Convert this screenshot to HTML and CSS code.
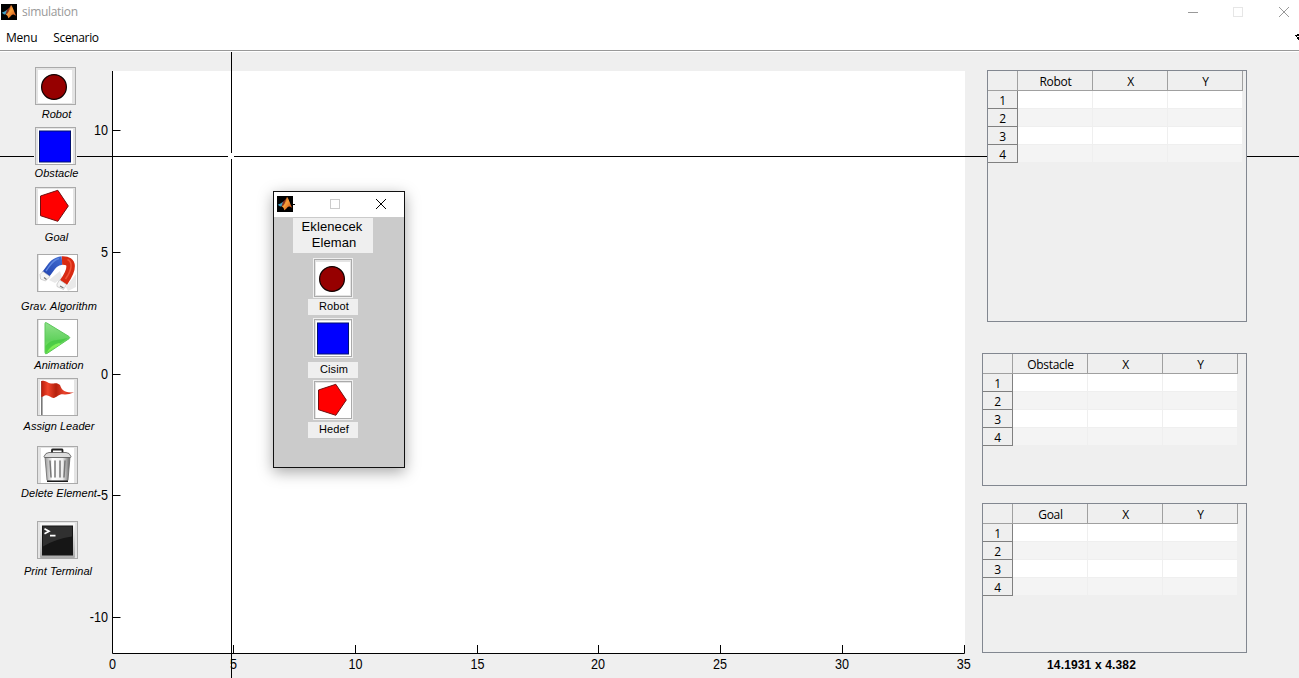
FILE: index.html
```html
<!DOCTYPE html>
<html lang="en">
<head>
<meta charset="utf-8">
<title>simulation</title>
<link rel="stylesheet" href="styles.css">
</head>
<body>
<svg class="defs" width="0" height="0">
  <defs>
    <linearGradient id="flame" x1="0" y1="0" x2="1" y2="1"><stop offset="0" stop-color="#a02a12"/><stop offset=".45" stop-color="#f7a03a"/><stop offset="1" stop-color="#c23a10"/></linearGradient>
    <linearGradient id="blue" x1="0" y1="1" x2="1" y2="0"><stop offset="0" stop-color="#2448b4"/><stop offset="1" stop-color="#3f68cc"/></linearGradient>
    <linearGradient id="green" x1="0" y1="0" x2="0" y2="1"><stop offset="0" stop-color="#8fe08a"/><stop offset=".55" stop-color="#62d25e"/><stop offset="1" stop-color="#7dee55"/></linearGradient>
    <linearGradient id="red" x1="0" y1="0" x2="1" y2="0"><stop offset="0" stop-color="#b81c0a"/><stop offset=".2" stop-color="#f0452c"/><stop offset=".45" stop-color="#b5200c"/><stop offset=".7" stop-color="#e8432c"/><stop offset="1" stop-color="#c8200c"/></linearGradient>
    <linearGradient id="metal" x1="0" y1="0" x2="1" y2="0"><stop offset="0" stop-color="#999"/><stop offset=".3" stop-color="#fff"/><stop offset=".7" stop-color="#eee"/><stop offset="1" stop-color="#666"/></linearGradient>
    <linearGradient id="frame" x1="0" y1="0" x2="0" y2="1"><stop offset="0" stop-color="#fafafa"/><stop offset="1" stop-color="#aaa"/></linearGradient>
    <symbol id="logo" viewBox="0 0 16 16">
      <rect width="16" height="16" fill="#000"/>
      <path d="M.7 8.8 4 7.2 6 5.8 7.3 6.5 4.7 10.2 3.2 10.4z" fill="#3fa0c4"/>
      <path d="M6 5.8 8.5 3.5 10 1 8.5 6.5 5.7 10.8 4.5 10.2z" fill="#873020"/>
      <path d="M10 1C11 1 12.5 6.5 15.3 12 13 10.5 11.8 10 10.5 11.2 9 13 8 14 7.3 14.2 7 12 6 10.8 4.7 10.4 8 9.5 8.5 4 10 1z" fill="url(#flame)"/>
    </symbol>
    <symbol id="robot" viewBox="1 1 39 36"><rect x="3" y="3" width="34" height="33" fill="#fff"/><circle cx="19" cy="20" r="12.4" fill="#960000" stroke="#100" stroke-width="1.2"/></symbol>
    <symbol id="square" viewBox="1 1 39 36"><rect x="3" y="2" width="35" height="35" fill="#fff"/><rect x="4.500" y="4" width="31" height="31" fill="#00f" stroke="#001070"/></symbol>
    <symbol id="pentagon" viewBox="1 1 39 36"><rect x="3" y="2" width="35" height="35" fill="#fff"/><path d="M5.5 9 22.8 3.3 33.3 19 22.8 34.3 5.5 28.7z" fill="#f00" stroke="#701010"/></symbol>
  </defs>
</svg>

<header class="titlebar">
  <svg class="logo"><use href="#logo"/></svg>
  <span class="title">simulation</span>
  <svg class="controls" width="101" height="10" fill="none">
    <path d="M0 5.5H10" stroke="#999"/><rect x="45.5" y=".5" width="9" height="9" stroke="#e6e6e6"/><path d="M91 0 101 10M101 0 91 10" stroke="#999"/>
  </svg>
</header>
<nav class="menubar"><span class="menu">Menu</span><span class="menu scenario">Scenario</span>
  <svg class="dock" width="4" height="7"><path d="M0 1H2V0H4V2H2V3H4V6H3V5H2V3H1V2H0z" fill="#000"/></svg>
</nav>

<main class="workspace">
  <div class="cross-h"></div><div class="cross-v"></div><div class="cross-gap"></div>

  <aside class="tools">
    <div class="tool"><div class="button"><svg><use href="#robot"/></svg></div><span class="label g2">Robot</span></div>
    <div class="tool"><div class="button"><svg><use href="#square"/></svg></div><span class="label g1">Obstacle</span></div>
    <div class="tool h67"><div class="button"><svg><use href="#pentagon"/></svg></div><span class="label g5">Goal</span></div>
    <div class="tool wide h65"><div class="button"><svg viewBox="1 1 39 36"><rect x="2" y="1" width="38" height="36" fill="#fff"/>
      <path d="M12 26 23 17 25 24 18 29zM29 33 39 20V33L31 37z" fill="#e9e9e9"/>
      <g fill="none" stroke-width="8.500"><path d="M8.500 20.500C13.500 15 15.500 7.500 25 6.500" stroke="url(#blue)"/><path d="M25 6.500C36.500 6 36 15 26.500 28.500" stroke="#d82a12"/><path d="M30.500 5.500C36 8 35 16 28.500 25" stroke="#ef5236" stroke-width="1.500"/><path d="M9 17C13 12 15 6 22 4.500" stroke="#6088e0" stroke-width="1.300"/></g>
      <path d="M3 20.500 6 17.500 13 22.500 8.500 27 3.500 25zM20 30 22.500 26 29.500 30.500 26.500 35.500 20 32.500z" fill="#f5f5f5" stroke="#b5b5b5" stroke-width=".6"/><path d="M7 23.500 9.500 25.500M23 32 26.500 34" stroke="#777" stroke-width="1.200"/>
    </svg></div><span class="label g7">Grav. Algorithm</span></div>
    <div class="tool wide h59"><div class="button"><svg viewBox="1 1 39 36"><rect x="2" y="1" width="38" height="36" fill="#fff"/>
      <path d="M8 4.500Q8 3 9.500 3.800L32 17.500Q33.500 18.700 32 19.700L10 34.500Q8 35.500 8 33.500z" fill="url(#green)" stroke="#5cc85a"/>
      <path d="M8.500 27Q13 21 20 21 27 20 31 18.800L10 33.500 8.500 34z" fill="#3fc43c" opacity=".65"/><path d="M10 33Q14 26 22 24L24 25z" fill="#94fb60" opacity=".7"/>
    </svg></div><span class="label g1">Animation</span></div>
    <div class="tool wide h68"><div class="button"><svg viewBox="1 1 39 36"><rect x="3" y="2" width="34" height="35" fill="#fff"/>
      <rect x="4" y="3" width="1.600" height="34" fill="#777"/>
      <path d="M4.300 3C9 1.500 10 5 14 5.500 18 5.500 20 4 23 7 25 13 28 14.500 37 14.500 32 16 30 17 26 16.300 22 16 20 19 17 20 14 20.300 12 17 9 17.300 7 17.500 6 19 4.300 19z" fill="url(#red)"/>
    </svg></div><span class="label g3">Assign Leader</span></div>
    <div class="tool wide h75"><div class="button"><svg viewBox="1 1 39 36"><rect x="4" y="2" width="33" height="35" fill="#fff"/>
      <path d="M15 7V4Q15 3.500 16 3.500H24.500Q25.500 3.500 25.500 4V7" fill="none" stroke="#222" stroke-width="1.800"/>
      <path d="M8 11H33L31 34Q31 35 29 35H12Q10 35 10 34z" fill="url(#metal)" stroke="#666" stroke-width=".8"/>
      <path d="M9 7.500 12 6.500H29L32 7.500 34 10.500Q34 11.500 33 11.500H8Q7 11.500 7 10.500z" fill="#ddd" stroke="#555" stroke-width=".8"/>
      <path d="M13 15 14 31M18 15V31M23 15V31M28 15 27 31" stroke="#777" stroke-width="1.500" stroke-linecap="round"/><path d="M10 35.300H31" stroke="#111" stroke-width="1.300"/>
    </svg></div><span class="label g2">Delete Element</span></div>
    <div class="tool wide"><div class="button"><svg viewBox="1 1 39 36">
      <rect x="3" y="2" width="35" height="35" rx="1" fill="url(#frame)"/><rect x="5" y="4.500" width="31" height="30" fill="#161616"/><path d="M6 25.500Q18 18 35 15.500V5.500H6z" fill="#303030"/>
      <path d="M7.500 7.800 12 10.300 7.500 12.800M13 14.600H18.500" fill="none" stroke="#fff" stroke-width="1.700"/>
    </svg></div><span class="label g5 terminal">Print Terminal</span></div>
  </aside>

  <svg class="plot" width="853" height="626">
    <rect x="0" y="19" width="853" height="583" fill="#fff"/>
    <path d="M.5 19V601.500H852.500V593M0 78.500H8.500M0 200.500H8.500M0 322.500H8.500M0 443.500H8.500M0 565.500H8.500M121.500 593V601M243.500 593V601M365.500 593V601M486.500 593V601M608.500 593V601M730.500 593V601" fill="none" stroke="#000"/>
    <g transform="scale(.9 1)">
      <g text-anchor="end"><text x="-4.400" y="83">10</text><text x="-4.400" y="205">5</text><text x="-4.400" y="327">0</text><text x="-4.400" y="448">-5</text><text x="-4.400" y="570">-10</text></g>
      <g text-anchor="middle"><text x=".6" y="617">0</text><text x="135" y="617">5</text><text x="270.500" y="617">10</text><text x="406" y="617">15</text><text x="540" y="617">20</text><text x="675.500" y="617">25</text><text x="811" y="617">30</text><text x="946.500" y="617">35</text></g>
    </g>
  </svg>

  <section class="panels">
    <div class="panel robots"><div class="grid">
      <b></b><b>Robot</b><b>X</b><b>Y</b>
      <i>1</i><s></s><s></s><s></s>
      <i>2</i><s class="alt"></s><s class="alt"></s><s class="alt"></s>
      <i>3</i><s></s><s></s><s></s>
      <i>4</i><s class="alt"></s><s class="alt"></s><s class="alt"></s>
    </div></div>
    <div class="panel obstacles"><div class="grid">
      <b></b><b>Obstacle</b><b>X</b><b>Y</b>
      <i>1</i><s></s><s></s><s></s>
      <i>2</i><s class="alt"></s><s class="alt"></s><s class="alt"></s>
      <i>3</i><s></s><s></s><s></s>
      <i>4</i><s class="alt"></s><s class="alt"></s><s class="alt"></s>
    </div></div>
    <div class="panel goals"><div class="grid">
      <b></b><b>Goal</b><b>X</b><b>Y</b>
      <i>1</i><s></s><s></s><s></s>
      <i>2</i><s class="alt"></s><s class="alt"></s><s class="alt"></s>
      <i>3</i><s></s><s></s><s></s>
      <i>4</i><s class="alt"></s><s class="alt"></s><s class="alt"></s>
    </div></div>
    <div class="coords">14.1931 x 4.382</div>
  </section>

  <div class="dialog">
    <div class="dialog-bar"><svg class="logo"><use href="#logo"/></svg>
      <svg class="dialog-controls" width="93" height="10" fill="none"><path d="M0 5.500H2" stroke="#000"/><rect x="37.500" y=".5" width="9" height="9" stroke="#ccc"/><path d="M83 0 93 10M93 0 83 10" stroke="#000"/></svg>
    </div>
    <div class="dialog-body">
      <div class="heading"><span>Eklenecek</span><span class="second">Eleman</span></div>
      <div class="choice first"><div class="button small"><svg><use href="#robot"/></svg></div><div class="caption">Robot</div></div>
      <div class="choice"><div class="button small"><svg><use href="#square"/></svg></div><div class="caption low">Cisim</div></div>
      <div class="choice last"><div class="button small"><svg><use href="#pentagon"/></svg></div><div class="caption mid">Hedef</div></div>
    </div>
  </div>
</main>
</body>
</html>
```
FILE: styles.css
```css
* { box-sizing: border-box; }
body { margin: 0; width: 1299px; height: 678px; overflow: hidden; background: #fff; color: #000; font-family: "Liberation Sans", sans-serif; }
svg { display: block; }
.defs { position: absolute; }
.titlebar { display: flex; height: 24px; padding: 0 10px 0 1px; align-items: center; }
.logo { width: 16px; height: 16px; flex: none; }
.title { margin-left: 5px; font: 12px/24px "Open Sans", sans-serif; color: #999; letter-spacing: -.3px; }
.controls { margin-left: auto; }
.menubar { display: flex; height: 28px; align-items: center; padding-left: 6px; border-bottom: 1px solid #fff; box-shadow: inset 0 -1px #999; font: 12px/26px "Open Sans", sans-serif; letter-spacing: -.25px; }
.scenario { margin-left: 16px; letter-spacing: -.35px; }
.dock { margin-left: auto; }

.workspace { position: relative; display: flex; width: 1299px; height: 626px; background: #efefef; }
.tools { width: 112px; flex: none; padding-top: 15px; }
.tool { display: flex; flex-direction: column; align-items: center; width: 113px; height: 60px; position: relative; z-index: 3; }
.tool.wide { width: 118px; }
.tool .button { margin-right: 2px; }
.tool.wide .button { margin-right: 3px; }
.h59 { height: 59px; }
.h65 { height: 65px; }
.h67 { height: 67px; }
.h68 { height: 68px; }
.h75 { height: 75px; }
.button { width: 41px; height: 38px; flex: none; border: 1px solid #aaa; background: #e4e4e4; box-shadow: 0 0 0 1px #efefef; overflow: hidden; }
.button svg { width: 39px; height: 36px; }
.label { font-size: 11px; line-height: 14px; font-style: italic; white-space: nowrap; letter-spacing: .05px; }
.terminal { margin-right: 2px; }
.g1 { margin-top: 1px; }
.g2 { margin-top: 2px; }
.g3 { margin-top: 3px; }
.g5 { margin-top: 5px; }
.g7 { margin-top: 7px; }

.plot { flex: none; overflow: visible; font-size: 14px; }
.cross-h { position: absolute; z-index: 2; left: 0; top: 104px; width: 1299px; height: 1px; background: #000; }
.cross-v { position: absolute; z-index: 2; left: 231px; top: 0; width: 1px; height: 626px; background: #000; }
.cross-gap { position: absolute; z-index: 2; left: 228px; top: 101px; width: 6px; height: 6px; background: #fff; }

.panels { display: flex; flex-direction: column; align-items: flex-end; width: 282px; padding-top: 18px; }
.panel { position: relative; z-index: 3; width: 265px; border: 1px solid #828790; background: #efefef; }
.robots { width: 260px; height: 252px; }
.obstacles { height: 133px; margin-top: 31px; }
.goals { height: 150px; margin-top: 17px; }
.grid { display: grid; grid-template-columns: 30px repeat(3, 75px); grid-template-rows: 20px repeat(4, 18px); font: 12px/22px "Open Sans", sans-serif; text-align: center; letter-spacing: -.3px; }
.grid b { font-weight: 400; padding-left: 1px; border-right: 1px solid #a0a0a0; border-bottom: 1px solid #a0a0a0; }
.grid i { font-style: normal; line-height: 19px; border-right: 1px solid #808080; border-bottom: 1px solid #808080; }
.grid s { background: #fff; border-right: 1px solid #efefef; border-bottom: 1px solid #efefef; }
.grid .alt { background: #f4f4f4; }
.coords { width: 265px; padding-right: 46px; margin-top: 5px; font-size: 12px; font-weight: 700; line-height: 14px; text-align: center; letter-spacing: .15px; }

.dialog { position: absolute; z-index: 4; left: 273px; top: 139px; width: 132px; height: 277px; border: 1px solid #111; background: #cbcbcb; box-shadow: 0 4px 14px rgba(0, 0, 0, .35); }
.dialog-bar { display: flex; align-items: flex-start; height: 25px; padding: 4px 0 0 3px; background: #fff; }
.dialog-controls { margin-top: 3px; }
.dialog-body { padding: 1px 0 0 19px; }
.heading { display: flex; flex-direction: column; width: 80px; height: 35px; padding-top: 1px; background: #efefef; font-size: 13px; line-height: 16px; letter-spacing: .1px; text-align: center; }
.heading span { margin-right: 2px; }
.heading .second { margin: 0 0 0 2px; }
.choice { display: flex; flex-direction: column; align-items: center; width: 50px; height: 62px; margin-left: 15px; }
.choice.first { height: 60px; margin-top: 6px; }
.small { width: 38px; height: 38px; }
.small svg { width: 39px; height: 36px; margin-left: -1px; }
.caption { width: 50px; height: 16px; margin-top: 2px; padding-left: 2px; background: #efefef; font-size: 11px; line-height: 15px; text-align: center; letter-spacing: .1px; }
.low { margin-top: 5px; }
.mid { margin-top: 3px; }
```
